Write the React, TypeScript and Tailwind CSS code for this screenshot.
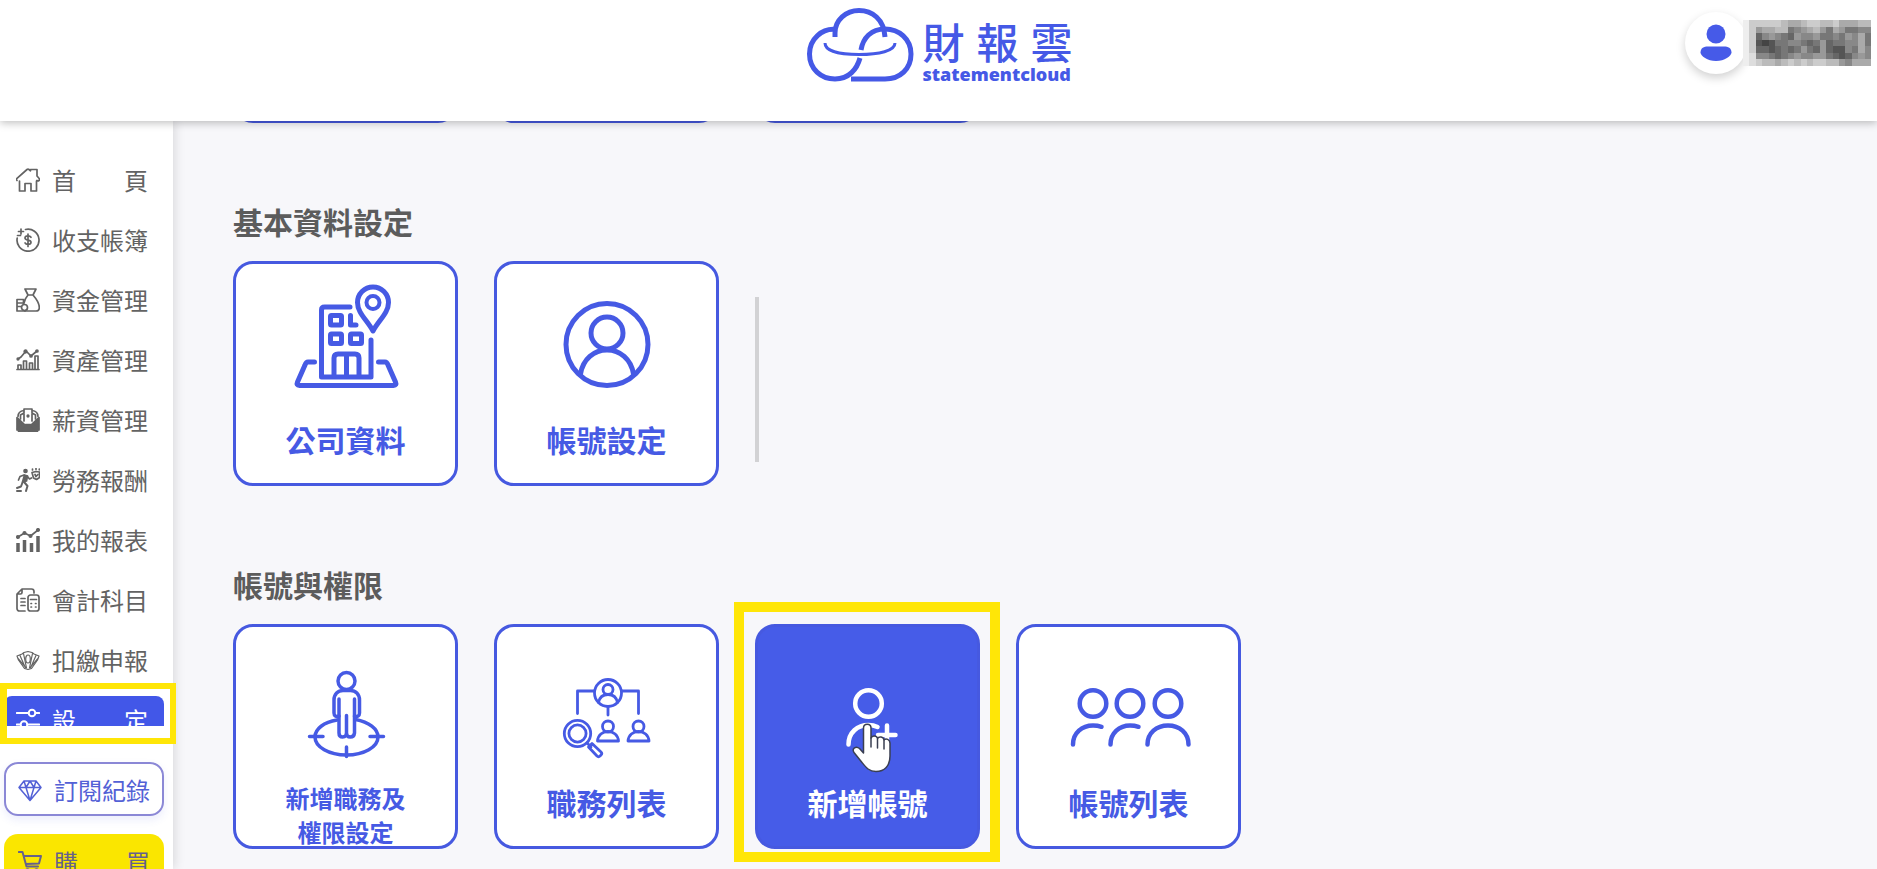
import type { ReactNode } from "react";
import { clsx } from "clsx";


interface NavItem {
    label: string;
    icon: ReactNode;
    active?: boolean;
}

interface SettingCardProps {
    label: string;
    icon: ReactNode;
    active?: boolean;
    secondLine?: string;
}


/* Small outline icons used in the sidebar */
function NavIcon({ children }: { children: ReactNode }) {
    return (
        <svg viewBox="0 0 24 24" className="size-6 shrink-0" fill="none" stroke="currentColor" strokeWidth="1.7" strokeLinecap="round" strokeLinejoin="round" aria-hidden="true">
            {children}
        </svg>
    );
}


/* Large icons used inside the cards */
function CardIcon({ strokeWidth, children }: { strokeWidth: number; children: ReactNode }) {
    return (
        <svg viewBox="0 0 130 120" className="h-[120px] w-[130px] shrink-0" fill="none" stroke="currentColor" strokeWidth={strokeWidth} strokeLinecap="round" strokeLinejoin="round" aria-hidden="true">
            {children}
        </svg>
    );
}


const navItems: NavItem[] = [
    {
        label: "首　　頁",
        icon: (
            <NavIcon>
                <path d="M3.5 13v10h5.5v-7.5h6V23h5.5V13" />
                <path d="M1 12.5c-.8-.8-.6-1.6 0-2.2L11 1.5c.7-.6 1.3-.6 2 0l1.5 1.3V1.5H21V8l2 2.3c.6.6.8 1.4 0 2.2-.7.6-1.5.5-2.1 0" />
            </NavIcon>
        ),
    },
    {
        label: "收支帳簿",
        icon: (
            <NavIcon>
                <path d="M9.5 1.5a11 11 0 1 1-8.3 8.7" />
                <path d="M5 1v5M2.5 3.500h5M1.500 7.500h3" />
                <path d="M15 9.300c-.6-1-1.700-1.500-3-1.500-1.700 0-3 .8-3 2.200 0 3 6 1.300 6 4.200 0 1.400-1.300 2.200-3 2.200-1.300 0-2.500-.5-3-1.500M12 6v12.500" />
            </NavIcon>
        ),
    },
    {
        label: "資金管理",
        icon: (
            <NavIcon>
                <path d="M9 1h11l-3 6h-5zM12 7C9.500 10 8.500 12 8 15M17 7c3 3.500 6.300 8 6.300 12.500 0 2.500-1.300 3.500-3.300 3.500H9" />
                <path d="M1 11.500h6.500M1 15h6.500M1 18.500h4M1 23h8M1 11.500V23M7.500 11.500V16" />
                <circle cx="8.500" cy="19.500" r="3" />
            </NavIcon>
        ),
    },
    {
        label: "資產管理",
        icon: (
            <NavIcon>
                <path d="M1 21.500h22M2 21v-4h3v4M7.500 21v-8h3v8M13.500 21v-6h3v6M19 21V8h3v13" />
                <path d="M2 11l3-2 5-6 5 5 6-5" />
                <circle cx="2" cy="11" r=".8" />
                <circle cx="9.500" cy="3.500" r="1.300" />
                <circle cx="15" cy="8" r="1" />
                <circle cx="21" cy="3" r="1" />
            </NavIcon>
        ),
    },
    {
        label: "薪資管理",
        icon: (
            <NavIcon>
                <path d="M1 9.500L8 16l-7 6zM23 9.500L16 16l7 6zM2.500 23.200l7-6.500h5l7 6.500z" fill="currentColor" />
                <path d="M8 13V1h8v12M2 8.500c0-3 2-5.500 6-6M22 8.500c0-3-2-5.500-6-6M4.500 11V7l3.500-2M19.500 11V7L16 5" />
                <circle cx="12" cy="8" r=".8" fill="currentColor" />
            </NavIcon>
        ),
    },
    {
        label: "勞務報酬",
        icon: (
            <NavIcon>
                <circle cx="9.500" cy="3" r="1.500" fill="currentColor" />
                <path d="M8.500 7l-2 7 4-1 1-5z" fill="currentColor" />
                <path d="M8 7L4 8.500 2.500 12M11 8l2.500 3 2-1" />
                <path d="M6.500 14.500l-1.500 4L1 20M8.500 14.500l3 3.500L10 23M1 23h4" strokeWidth="2" />
                <path d="M16 4.500l1.500 5.500 3 1.500 3-2V4l-3.500-.5z" />
                <path d="M16.500 2V1M20 1.500v-1M23.300 1.800V1M19 6.500l1 2 2-2" />
            </NavIcon>
        ),
    },
    {
        label: "我的報表",
        icon: (
            <NavIcon>
                <path d="M2 15v9M8.500 12v12M15.500 15v9M22 8v16" strokeWidth="3.500" strokeLinecap="butt" />
                <path d="M2 9l6.500-4 6 3L22 2" />
                <circle cx="2" cy="9" r="1.200" fill="currentColor" />
                <circle cx="8.500" cy="5" r="1.200" fill="currentColor" />
                <circle cx="14.500" cy="8" r="1.200" fill="currentColor" />
                <circle cx="22" cy="2" r="1.200" fill="currentColor" />
            </NavIcon>
        ),
    },
    {
        label: "會計科目",
        icon: (
            <NavIcon>
                <path d="M9 23H3.500C2 23 1 22 1 20.500V6l5-5h9.500C17 1 18 2 18 3.500V5M1 6h3.500C5.500 6 6 5.500 6 4.500V1" />
                <path d="M5 10.500h4M5 14h4M5 17.500h4" />
                <rect x="12" y="7" width="11" height="16" rx="2.500" />
                <path d="M14.500 11.500h6M15 15.500h.5M19.500 15.500h.5M15 19h.5M19.500 19h.5" />
            </NavIcon>
        ),
    },
    {
        label: "扣繳申報",
        icon: (
            <NavIcon>
                <g strokeWidth="1.200">
                    <path d="M1 8l5-2 2-1.500 4-1 4 1L18 6l5 2-1.500 4-6 8.500-3.500 1-3.500-1-6-8.500z" />
                    <path d="M4 7.500L9.500 20M7.500 5.500L10.500 20M20 7.500L14.500 20M16.500 5.500L13.500 20M2.500 11l5 6M21.500 11l-5 6" />
                    <ellipse cx="12" cy="11" rx="2.300" ry="4" />
                </g>
            </NavIcon>
        ),
    },
    {
        label: "設　　定",
        active: true,
        icon: (
            <NavIcon>
                <path d="M.8 5h11.500M20 5h3.200M.8 16.500H4M11.500 16.500h11.700" strokeWidth="2" />
                <circle cx="16" cy="5" r="3.300" strokeWidth="2" />
                <circle cx="8" cy="16.500" r="3.300" strokeWidth="2" />
            </NavIcon>
        ),
    },
];


const companyIcon = (
    <CardIcon strokeWidth={5}>
        <path d="M69 29H43.500q-3 0-3 3V99H90V62" />
        <rect x="49.500" y="37.500" width="11" height="9.500" rx="1" />
        <rect x="49.500" y="56" width="11" height="9.500" rx="1" />
        <rect x="69.500" y="56" width="11" height="9.500" rx="1" />
        <path d="M69.500 37.500V47H75" />
        <path d="M53 98V80q0-4 4-4h17q4 0 4 4v18M65.500 77v21" />
        <path d="M33.500 84H27q-2 0-3 3l-7.500 17q-1.500 3.500 2 3.500h94q3.500 0 2-3.500L107 87q-1-3-3-3h-6.500" />
        <path d="M92 53C86 42 76.500 35 76.500 24.500a15.500 15.500 0 0 1 31 0C107.500 35 98 42 92 53z" />
        <circle cx="92" cy="24.500" r="6.500" strokeWidth="4" />
    </CardIcon>
);

const accountIcon = (
    <CardIcon strokeWidth={5}>
        <circle cx="65" cy="66.500" r="41" />
        <circle cx="65" cy="55" r="16" />
        <path d="M38.500 96C41 81 52 72 65 72s24 9 26.500 24" />
    </CardIcon>
);

const roleIcon = (
    <CardIcon strokeWidth={3.500}>
        <circle cx="65.500" cy="40" r="8.500" />
        <path d="M58 58v34q0 4 3.700 4t3.800-4V74.500V92q0 4 3.800 4t4.200-4V58" />
        <path d="M58 75c-3 1-5 0-5-3V59c0-6 4-9.500 9-9.500h7.500c5 0 9 3.500 9 9.500v13c0 3-2 4-5 3" />
        <path d="M56 79C43 81 34 88 34 96c0 10 14 18 31.500 18S97 106 97 96c0-8-9-15-22.500-17.500" />
        <path d="M28.500 95.500H42M89 95.500h13.500M65.500 106v9.500" />
    </CardIcon>
);

const roleListIcon = (
    <CardIcon strokeWidth={2.800}>
        <circle cx="66" cy="52" r="13.500" />
        <circle cx="66" cy="48.500" r="5" />
        <path d="M56.500 61.500c1-5 4.500-8 9.500-8s8.500 3 9.500 8M66 66v8" />
        <path d="M52 50H35.500v22.500M80 50h16.500v22.500" />
        <circle cx="35.500" cy="92.500" r="13.200" />
        <circle cx="35.500" cy="92.500" r="8.600" />
        <path d="M45 102l4 4M50 102.500l9 8.500q1.500 1.500 0 3l-1 1q-1.500 1.500-3 0l-8.500-9z" />
        <circle cx="66" cy="85.500" r="5.500" />
        <path d="M55.500 100c.5-6 5-9.500 10.500-9.500s10 3.500 10.500 9.500z" />
        <circle cx="96.500" cy="85.500" r="5.500" />
        <path d="M86 100c.5-6 5-9.500 10.500-9.500s10 3.500 10.500 9.500z" />
    </CardIcon>
);

const addAccountIcon = (
    <CardIcon strokeWidth={4.500}>
        <circle cx="65.500" cy="62.500" r="13.300" />
        <path d="M45.500 103.500c0-12 9-19.500 20-19.500 3.500 0 6 .5 9 2" />
        <path d="M84 84.500v19M75 94h17.500" />
    </CardIcon>
);

const accountListIcon = (
    <CardIcon strokeWidth={4.500}>
        <circle cx="29" cy="62.500" r="13.300" />
        <circle cx="66" cy="62.500" r="13.300" />
        <circle cx="104" cy="62.500" r="13.300" />
        <path d="M9 103.500C9 92 18 84.500 29 84.500c3 0 5.500.3 8.500 1.300" />
        <path d="M46.500 103.500c0-11.500 9-19 19.500-19 3 0 5.500.3 8.500 1.300" />
        <path d="M83.500 103.500c0-11.500 9-19 20.500-19s20.500 7.500 20.500 19" />
    </CardIcon>
);


function Logo() {
    return (
        <a href="#home" className="flex items-end gap-2 text-[#4559e6]">
            <svg viewBox="0 0 110 78" className="h-[78px] w-[110px]" fill="none" stroke="currentColor" strokeWidth="5" aria-hidden="true">
                <path d="M30 31V27C30 14 41 4.500 54 4.500S79 13 80 31" />
                <path d="M31 23.500C17 22 4.500 33 4.500 48S16 73 30 73c14 0 22-10 25-21" />
                <path d="M56 44C58 32 66 23 80 23c14 0 26 10 26 25S95 73 80 73H46" />
                <path d="M20 37c0 8 14 11.500 34 11.500S90 45 90 37" strokeWidth="3" />
            </svg>
            <span className="flex w-[150px] flex-col">
                <span className="flex justify-between text-[42px] leading-[46px] font-medium">
                    <span>財</span>
                    <span>報</span>
                    <span>雲</span>
                </span>
                <span className="font-['Open_Sans','Noto_Sans_CJK_TC',sans-serif] text-[18px] leading-5 font-extrabold">statementcloud</span>
            </span>
        </a>
    );
}


/* Grey level of every block of the masked user name, one hex digit each */
const maskRows = [
    "ecccccbaabccbbcaaabb",
    "ec9aabb789ab97a97788",
    "ec6898769889778798a7",
    "ec5457788767967788a7",
    "ec6656767976965587a8",
    "ed887678988997656898",
    "edcbbabcbcbccbb98aaa",
];

function MaskedName() {
    return (
        <svg viewBox="0 0 120 42" preserveAspectRatio="none" className="relative -ml-1 h-[46px] w-32" shapeRendering="crispEdges" role="img" aria-label="user">
            {maskRows.map((row, y) =>
                row.split("").map((level, x) => (
                    <rect key={`${x}-${y}`} x={x * 6} y={y * 6} width="6" height="6" fill={`#${level.repeat(6)}`} />
                ))
            )}
        </svg>
    );
}


function HandPointer() {
    return (
        <svg viewBox="0 0 44 52" className="absolute top-[98px] left-[95px] h-[52px] w-11" fill="#ffffff" stroke="#3a3f52" strokeWidth="1.500" strokeLinejoin="round" strokeLinecap="round" aria-hidden="true">
            <path d="M13.500 31V6c0-5 7.500-5 7.500 0v10c1-3 6-2.500 6.500.5 1.500-2.500 6-2 6.500 1.500 2-2 6-.5 6 3v13c0 10-5.500 15.500-14 15.500-7 0-10-4-14-9L4 30.500c-2.500-4 2-7 5.500-4z" />
            <path d="M21 16v9M27.500 17v9M34 18.500V27" />
        </svg>
    );
}


function SettingCard({ label, icon, active = false, secondLine }: SettingCardProps) {
    return (
        <div className="relative">

            <button
                type="button"
                className={clsx(
                    "flex size-[225px] flex-col items-center rounded-[20px] border-[3px] border-[#4659e0] pt-3.5 font-bold",
                    active ? "bg-[#465ce8] text-white" : "bg-white text-[#465ae4]"
                )}
            >
                {icon}
                {secondLine ? (
                    <span className="mt-5 text-2xl leading-[34px]">
                        {label}
                        <br />
                        {secondLine}
                    </span>
                ) : (
                    <span className="mt-[23px] text-[30px] leading-9">{label}</span>
                )}
            </button>

            {/* Highlight frame and pointer */}
            {active && (
                <>
                    <div className="pointer-events-none absolute -top-[22px] -right-5 -bottom-[13px] -left-[21px] border-[10px] border-[#ffe607]" />
                    <HandPointer />
                </>
            )}

        </div>
    );
}


function Sidebar() {
    return (
        <aside className="relative z-10 flex w-[173px] shrink-0 flex-col bg-white text-2xl text-[#636363] shadow-[2px_0_10px_rgba(0,0,0,0.12)]">

            <div className="relative min-h-0 flex-1">
                <nav className="h-full overflow-hidden pt-[35px]">
                    <ul className="flex flex-col gap-2 pr-[9px] pl-1">
                        {navItems.map((item) => (
                            <li key={item.label}>
                                <a
                                    href="#menu"
                                    className={clsx(
                                        "flex h-[52px] items-center gap-3 rounded-lg pb-1 pl-3 whitespace-nowrap",
                                        item.active && "bg-[#4257e8] text-white"
                                    )}
                                >
                                    {item.icon}
                                    {item.label}
                                </a>
                            </li>
                        ))}
                    </ul>
                </nav>
                <div className="pointer-events-none absolute -right-[3px] -bottom-[18px] left-0 h-[61px] border-[6px] border-l-[7px] border-[#ffe607]" />
            </div>

            <div className="flex h-[143px] shrink-0 flex-col gap-[18px] overflow-hidden pt-9 pr-[9px] pl-1">
                <button type="button" className="flex h-[54px] shrink-0 items-center gap-3 rounded-[14px] border-2 border-[#8b88d6] pt-0.5 pl-3 text-[#5361d6] shadow-[0_4px_8px_rgba(70,90,230,0.1)]">
                    <NavIcon>
                        <path d="M6 3h12l5 6.500L12 22.500 1 9.500zM1 9.500h22M6 3l2 6.500 4 13 4-13L18 3M8 9.500L12 3l4 6.500" strokeWidth="1.500" />
                    </NavIcon>
                    <span>訂閱紀錄</span>
                </button>
                <button type="button" className="flex h-[54px] shrink-0 items-center gap-3 rounded-[14px] bg-[#fae600] pt-0.5 pl-3.5 text-[#66618c]">
                    <NavIcon>
                        <path d="M.8 2h3.700l4 14.500H20M5.500 6H23l-2 7.500-13 .5" strokeWidth="2" />
                        <circle cx="9.500" cy="21" r="1.800" />
                        <circle cx="18.500" cy="21" r="1.800" />
                    </NavIcon>
                    <span>購　　買</span>
                </button>
            </div>

        </aside>
    );
}


export default function App() {
    return (
        <div className="flex h-screen flex-col overflow-hidden bg-[#f7f7fa] font-['Noto_Sans_CJK_TC',sans-serif]">

            {/* Header */}
            <header className="relative z-20 grid h-[121px] shrink-0 grid-cols-[1fr_auto_1fr] items-start bg-white pt-1.5 shadow-[0_2px_8px_rgba(0,0,0,0.25)]">
                <div />
                <Logo />
                <div className="flex items-center justify-self-end pt-1.5 pr-1.5">
                    <button type="button" aria-label="account" className="flex size-[62px] items-center justify-center rounded-full bg-white shadow-[0_4px_10px_rgba(0,0,0,0.18)]">
                        <svg viewBox="0 0 32 38" className="h-[38px] w-8" fill="#465ae8" aria-hidden="true">
                            <circle cx="16" cy="10" r="9.500" />
                            <path d="M.5 28.500C.5 24 4 22.500 8 22.500h16c4 0 7.500 1.500 7.500 6 0 3.500-7 8.500-15.500 8.500S.5 32 .5 28.500z" />
                        </svg>
                    </button>
                    <MaskedName />
                </div>
            </header>

            <div className="flex min-h-0 flex-1">

                <Sidebar />

                <main className="flex min-w-0 flex-1 flex-col overflow-hidden pl-[60px]">

                    {/* Tail of the row scrolled under the header */}
                    <div className="flex h-0.5 shrink-0 items-end gap-9 overflow-hidden" aria-hidden="true">
                        <div className="h-12 w-[225px] shrink-0 rounded-[20px] border-[3px] border-[#4659e0] bg-white" />
                        <div className="h-12 w-[225px] shrink-0 rounded-[20px] border-[3px] border-[#4659e0] bg-white" />
                        <div className="h-12 w-[225px] shrink-0 rounded-[20px] border-[3px] border-[#4659e0] bg-white" />
                    </div>

                    <section className="mt-20 shrink-0">
                        <h2 className="text-[30px] leading-9 font-bold text-[#5c5c5c]">基本資料設定</h2>
                        <div className="mt-[22px] flex items-center gap-9">
                            <SettingCard label="公司資料" icon={companyIcon} />
                            <SettingCard label="帳號設定" icon={accountIcon} />
                            <div className="mt-3 h-[165px] w-1 bg-[#d2d2d4]" />
                        </div>
                    </section>

                    <section className="mt-20 shrink-0">
                        <h2 className="text-[30px] leading-9 font-bold text-[#5c5c5c]">帳號與權限</h2>
                        <div className="mt-[22px] flex items-center gap-9">
                            <SettingCard label="新增職務及" secondLine="權限設定" icon={roleIcon} />
                            <SettingCard label="職務列表" icon={roleListIcon} />
                            <SettingCard label="新增帳號" icon={addAccountIcon} active />
                            <SettingCard label="帳號列表" icon={accountListIcon} />
                        </div>
                    </section>

                </main>

            </div>

        </div>
    );
}
